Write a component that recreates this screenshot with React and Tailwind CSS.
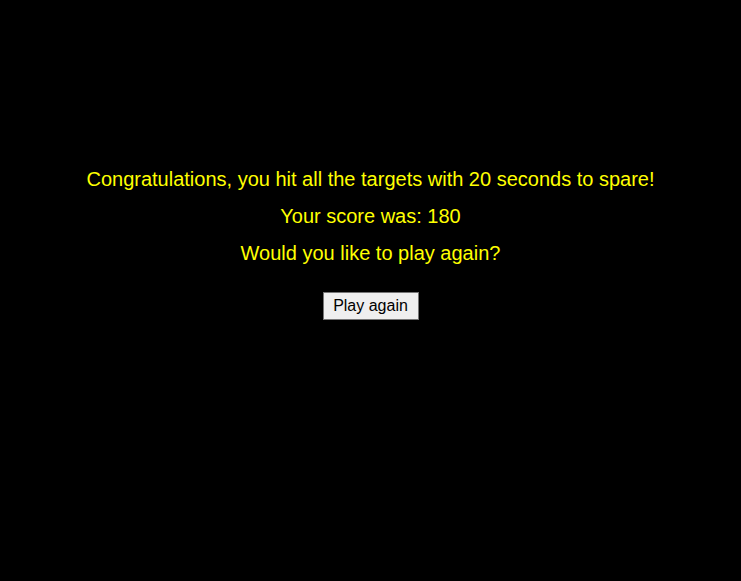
export default function App() {
    return (
        <div className="min-h-[581px] bg-black text-center" style={{ fontFamily: '"Liberation Sans", Arial, sans-serif' }}>
            <div className="pt-[168px]">
                <p className="text-[20px] leading-[23px] text-[#ffff00] mb-[14px]">Congratulations, you hit all the targets with 20 seconds to spare!</p>
                <p className="text-[20px] leading-[23px] text-[#ffff00] mb-[14px]">Your score was: 180</p>
                <p className="text-[20px] leading-[23px] text-[#ffff00]">Would you like to play again?</p>
                <button className="mt-[27px] h-[28px] w-[96px] bg-[#efefef] border border-[#767676] text-[16px] text-black">Play again</button>
            </div>
        </div>
    );
}
